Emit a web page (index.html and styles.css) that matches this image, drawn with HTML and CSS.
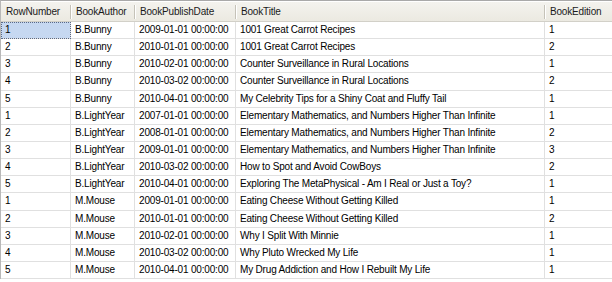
FILE: index.html
```html
<!DOCTYPE html>
<html>
<head>
<meta charset="utf-8">
<link rel="stylesheet" href="styles.css">
</head>
<body>
<div class="grid">
  <div class="hd">RowNumber</div><div class="hd">BookAuthor</div><div class="hd">BookPublishDate</div><div class="hd">BookTitle</div><div class="hd">BookEdition</div>

  <div class="c sel">1</div><div class="c">B.Bunny</div><div class="c">2009-01-01 00:00:00</div><div class="c">1001 Great Carrot Recipes</div><div class="c">1</div>
  <div class="c">2</div><div class="c">B.Bunny</div><div class="c">2010-01-01 00:00:00</div><div class="c">1001 Great Carrot Recipes</div><div class="c">2</div>
  <div class="c">3</div><div class="c">B.Bunny</div><div class="c">2010-02-01 00:00:00</div><div class="c">Counter Surveillance in Rural Locations</div><div class="c">1</div>
  <div class="c">4</div><div class="c">B.Bunny</div><div class="c">2010-03-02 00:00:00</div><div class="c">Counter Surveillance in Rural Locations</div><div class="c">2</div>
  <div class="c">5</div><div class="c">B.Bunny</div><div class="c">2010-04-01 00:00:00</div><div class="c">My Celebrity Tips for a Shiny Coat and Fluffy Tail</div><div class="c">1</div>
  <div class="c">1</div><div class="c">B.LightYear</div><div class="c">2007-01-01 00:00:00</div><div class="c">Elementary Mathematics, and Numbers Higher Than Infinite</div><div class="c">1</div>
  <div class="c">2</div><div class="c">B.LightYear</div><div class="c">2008-01-01 00:00:00</div><div class="c">Elementary Mathematics, and Numbers Higher Than Infinite</div><div class="c">2</div>
  <div class="c">3</div><div class="c">B.LightYear</div><div class="c">2009-01-01 00:00:00</div><div class="c">Elementary Mathematics, and Numbers Higher Than Infinite</div><div class="c">3</div>
  <div class="c">4</div><div class="c">B.LightYear</div><div class="c">2010-03-02 00:00:00</div><div class="c">How to Spot and Avoid CowBoys</div><div class="c">2</div>
  <div class="c">5</div><div class="c">B.LightYear</div><div class="c">2010-04-01 00:00:00</div><div class="c">Exploring The MetaPhysical - Am I Real or Just a Toy?</div><div class="c">1</div>
  <div class="c">1</div><div class="c">M.Mouse</div><div class="c">2009-01-01 00:00:00</div><div class="c">Eating Cheese Without Getting Killed</div><div class="c">1</div>
  <div class="c">2</div><div class="c">M.Mouse</div><div class="c">2010-01-01 00:00:00</div><div class="c">Eating Cheese Without Getting Killed</div><div class="c">2</div>
  <div class="c">3</div><div class="c">M.Mouse</div><div class="c">2010-02-01 00:00:00</div><div class="c">Why I Split With Minnie</div><div class="c">1</div>
  <div class="c">4</div><div class="c">M.Mouse</div><div class="c">2010-03-02 00:00:00</div><div class="c">Why Pluto Wrecked My Life</div><div class="c">1</div>
  <div class="c">5</div><div class="c">M.Mouse</div><div class="c">2010-04-01 00:00:00</div><div class="c">My Drug Addiction and How I Rebuilt My Life</div><div class="c">1</div>
</div>
</body>
</html>
```

FILE: styles.css
```css
html, body {
  margin: 0;
  padding: 0;
  background: #ffffff;
}
body {
  width: 612px;
  height: 282px;
  overflow: hidden;
  font-family: "Liberation Sans", Arial, sans-serif;
  font-size: 10px;
  letter-spacing: -0.18px;
  color: #000;
}
.grid {
  display: grid;
  grid-template-columns: 70px 64px 101px 309px 68px;
  grid-template-rows: 21px repeat(15, 17.15px);
  border-top: 1px solid #a9a9a9;
  border-left: 1px solid #b8b8b8;
  width: 612px;
  box-sizing: border-box;
}
.hd {
  background: linear-gradient(#f4f3ee, #ebe9e1);
  border-bottom: 1px solid #d2d0c8;
  border-top: 1px solid #ffffff;
  padding-left: 5px;
  line-height: 19px;
  position: relative;
  color: #1a1a1a;
  white-space: nowrap;
}
.hd + .hd::before {
  content: "";
  position: absolute;
  left: -1px;
  top: 3px;
  height: 14px;
  width: 1px;
  background: #c5c2b8;
  box-shadow: 1px 0 0 #ffffff;
}
.c {
  border-right: 1px solid #e0e0e0;
  border-bottom: 1px solid #e0e0e0;
  padding-left: 4px;
  line-height: 16px;
  white-space: nowrap;
  overflow: hidden;
}
.sel {
  background: #c6d8f1;
  outline: 1px dotted #5a6a88;
  outline-offset: -1px;
}
```
